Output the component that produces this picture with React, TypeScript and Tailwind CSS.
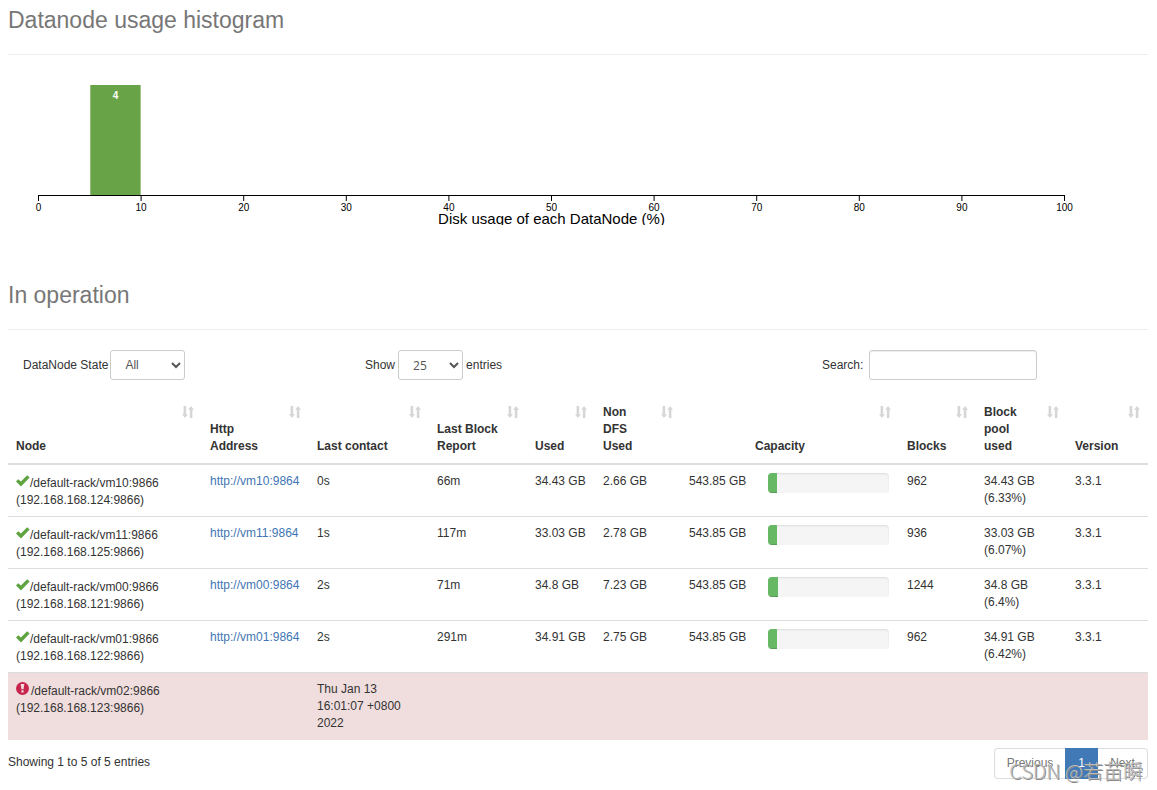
interface DataNode {
  id: number;
  name: string;
  ip: string;
  contact: string;
  report: string;
  used: string;
  nonDfs: string;
  capacity: string;
  usage: number;
  blocks: string;
  poolUsed: string;
  poolPercent: string;
  version: string;
}

const nodes: DataNode[] = [
  { id: 1, name: "vm10", ip: "192.168.168.124", contact: "0s", report: "66m", used: "34.43 GB", nonDfs: "2.66 GB", capacity: "543.85 GB", usage: 7.4, blocks: "962", poolUsed: "34.43 GB", poolPercent: "6.33%", version: "3.3.1" },
  { id: 2, name: "vm11", ip: "192.168.168.125", contact: "1s", report: "117m", used: "33.03 GB", nonDfs: "2.78 GB", capacity: "543.85 GB", usage: 7.4, blocks: "936", poolUsed: "33.03 GB", poolPercent: "6.07%", version: "3.3.1" },
  { id: 3, name: "vm00", ip: "192.168.168.121", contact: "2s", report: "71m", used: "34.8 GB", nonDfs: "7.23 GB", capacity: "543.85 GB", usage: 8.3, blocks: "1244", poolUsed: "34.8 GB", poolPercent: "6.4%", version: "3.3.1" },
  { id: 4, name: "vm01", ip: "192.168.168.122", contact: "2s", report: "291m", used: "34.91 GB", nonDfs: "2.75 GB", capacity: "543.85 GB", usage: 7.4, blocks: "962", poolUsed: "34.91 GB", poolPercent: "6.42%", version: "3.3.1" },
];

const columns = [
  { label: "Node", width: "w-[194px]" },
  { label: "Http Address", width: "w-[107px]" },
  { label: "Last contact", width: "w-[120px]" },
  { label: "Last Block Report", width: "w-[98px]" },
  { label: "Used", width: "w-[68px]" },
  { label: "Non DFS Used", width: "w-[86px]" },
  { label: "Capacity", width: "w-[218px]" },
  { label: "Blocks", width: "w-[77px]" },
  { label: "Block pool used", width: "w-[91px]" },
  { label: "Version", width: "w-[81px]" },
];

const ticks = [0, 10, 20, 30, 40, 50, 60, 70, 80, 90, 100];

const SortIcon = () => (
  <svg viewBox="0 0 12 12" className="absolute top-2.5 right-2 h-3 w-3 fill-[#d6d6d6]" aria-hidden="true">
    <path d="M1.6 0h2.6v8.2h1.8L2.9 12 0 8.2h1.6zM7.8 12h2.6V3.8H12L9.1 0 6.2 3.8h1.6z" />
  </svg>
);

const CheckIcon = () => (
  <svg viewBox="0 0 14 12" className="mt-0.5 inline-block h-3 w-3.5 align-baseline fill-[#5fa341]" aria-hidden="true">
    <path d="M0 6.6 2.2 4.3 4.9 6.5 11.2 0.2 13.6 2.5 5 11.4z" />
  </svg>
);

const AlertIcon = () => (
  <svg viewBox="0 0 12 12" className="mt-px mr-0.5 inline-block h-[13px] w-[13px] align-baseline" aria-hidden="true">
    <circle cx="6" cy="6" r="6" fill="#c7254e" />
    <path d="M4.3 1.8h3.4L7 6.8H5zM5 7.7h2v2H5z" fill="#f0dddd" />
  </svg>
);

const Histogram = () => (
  <svg viewBox="0 0 1140 150" className="mt-5 block h-auto w-full" role="img" aria-label="Datanode usage histogram">
    <rect x="82.3" y="10" width="50.3" height="110" fill="#68a347" />
    <text x="107.5" y="24" textAnchor="middle" fontSize="10" fontWeight="bold" fill="#fff">
      4
    </text>
    <path d="M30.5 126V120.5H1056.5V126" fill="none" stroke="#000" />
    {ticks.map((tick) => (
      <g key={tick}>
        <path d={`M${30.5 + tick * 10.26} 120V126`} stroke="#000" />
        <text x={30.5 + tick * 10.26} y="136" textAnchor="middle" fontSize="10">
          {tick}
        </text>
      </g>
    ))}
    <text x="543.5" y="149" textAnchor="middle" fontSize="15">
      Disk usage of each DataNode (%)
    </text>
  </svg>
);

const SectionTitle = ({ children }: { children: string }) => (
  <h3 className="border-b border-[#eee] pb-[22px] text-[23px] leading-6 text-[#777]">{children}</h3>
);

const NodeRow = ({ node }: { node: DataNode }) => (
  <tr className="h-[52px] align-top [&>td]:border-b [&>td]:border-[#ddd] [&>td]:px-2 [&>td]:pt-2">
    <td>
      <CheckIcon />
      /default-rack/{node.name}:9866
      <br />({node.ip}:9866)
    </td>
    <td>
      <a href={`http://${node.name}:9864`} className="text-[#3f76b3]">
        http://{node.name}:9864
      </a>
    </td>
    <td>{node.contact}</td>
    <td>{node.report}</td>
    <td className="whitespace-nowrap">{node.used}</td>
    <td>{node.nonDfs}</td>
    <td>
      <div className="flex">
        <span className="w-[79px] whitespace-nowrap">{node.capacity}</span>
        <div className="mr-0.5 h-5 flex-1 overflow-hidden rounded bg-[#f5f5f5] shadow-[inset_0_1px_2px_rgba(0,0,0,0.1)]">
          <div
            className="h-full bg-[#67b865] shadow-[inset_0_-1px_0_rgba(0,0,0,0.15)]"
            style={{ width: `${node.usage}%` }}
          />
        </div>
      </div>
    </td>
    <td>{node.blocks}</td>
    <td>
      {node.poolUsed}
      <br />({node.poolPercent})
    </td>
    <td>{node.version}</td>
  </tr>
);

export default function App() {
  return (
    <main className="relative bg-white pr-[9px] pb-[11px] pl-2 font-['Liberation_Sans',Arial,sans-serif] text-[12px] leading-[17px] text-[#333]">
      <section className="pt-2">
        <SectionTitle>Datanode usage histogram</SectionTitle>
        <Histogram />
      </section>

      <section className="pt-[58px]">
        <SectionTitle>In operation</SectionTitle>

        <div className="mt-5 grid grid-cols-[342fr_457fr_341fr] *:pl-[15px]">
          <div className="flex items-center gap-0.5">
            <label htmlFor="state">DataNode State</label>
            <select id="state" className="h-[30px] w-[75px] rounded-[3px] border border-[#ccc] bg-white px-2.5 text-[#555]">
              <option>All</option>
            </select>
          </div>
          <div className="flex items-center gap-[3px]">
            <label htmlFor="length">Show</label>
            <select id="length" defaultValue="25" className="h-[30px] w-[65px] rounded-[3px] border border-[#ccc] bg-white px-2.5 font-['Open_Sans',sans-serif] text-[#555]">
              <option>25</option>
            </select>
            <span>entries</span>
          </div>
          <div className="flex items-center gap-1.5">
            <label htmlFor="search">Search:</label>
            <input id="search" type="search" className="h-[30px] w-[168px] rounded-[3px] border border-[#ccc] px-2.5 shadow-[inset_0_1px_1px_rgba(0,0,0,0.075)]" />
          </div>
        </div>

        <table className="mt-4 w-full table-fixed border-separate border-spacing-0 text-left">
          <thead>
            <tr>
              {columns.map((column) => (
                <th
                  key={column.label}
                  className={`relative border-b-2 border-[#ddd] py-2 pr-7 pl-2 align-bottom ${column.label === "Capacity" ? "text-center" : ""} ${column.width}`}
                >
                  {column.label}
                  <SortIcon />
                </th>
              ))}
            </tr>
          </thead>
          <tbody>
            {nodes.map((node) => (
              <NodeRow key={node.id} node={node} />
            ))}
            <tr className="bg-[#f0dddd] align-top [&>td]:p-2">
              <td>
                <AlertIcon />
                /default-rack/vm02:9866
                <br />
                (192.168.168.123:9866)
              </td>
              <td />
              <td>Thu Jan 13 16:01:07 +0800 2022</td>
              <td colSpan={7} />
            </tr>
          </tbody>
        </table>

        <div className="flex justify-between pt-2">
          <p className="pt-1.5">Showing 1 to 5 of 5 entries</p>
          <nav className="flex h-[31px] text-[#777]" aria-label="Pages">
            <button className="w-[71px] rounded-l border border-r-0 border-[#ddd]">Previous</button>
            <button className="w-[33px] bg-[#4179b6] text-white">1</button>
            <button className="w-[50px] rounded-r border border-l-0 border-[#ddd]">Next</button>
          </nav>
        </div>
      </section>

      <span className="pointer-events-none absolute right-[14px] bottom-[7px] font-['Noto_Sans_CJK_SC',sans-serif] text-[20px] leading-6 font-light whitespace-nowrap text-[#bbb] [text-shadow:1px_1px_0_#888]">
        CSDN @若苗瞬
      </span>
    </main>
  );
}
